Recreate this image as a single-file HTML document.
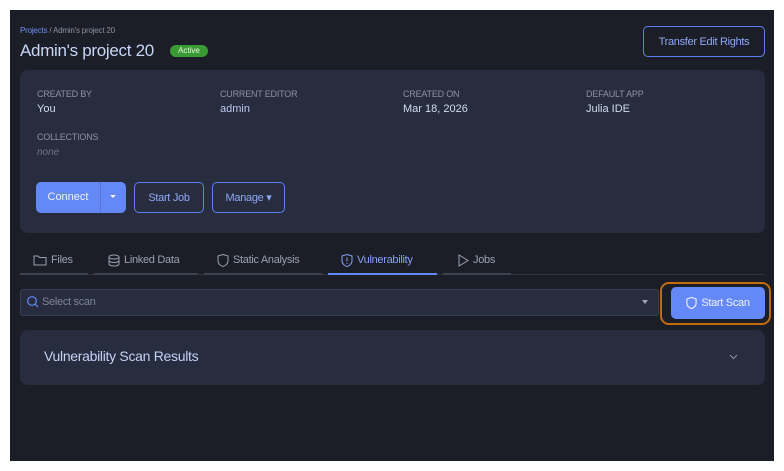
<!DOCTYPE html>
<html><head><style>
*{box-sizing:border-box;margin:0;padding:0}
body{width:784px;height:471px;background:#fff;font-family:"Liberation Sans",sans-serif;position:relative;overflow:hidden}
#app{position:absolute;left:10px;top:10px;width:764px;height:451px;background:#1b1e27}
.a{position:absolute}
.lbl{font-size:9px;color:#8b91a3;letter-spacing:-0.2px}
.val{font-size:11px;color:#b9c8ee}
.btn{position:absolute;border:1.5px solid #5b7ff0;border-radius:5px;color:#8fa8f5;font-size:11px;display:flex;align-items:center;justify-content:center;letter-spacing:-0.3px}
.tab{position:absolute;top:253px;height:14px;font-size:11px;color:#9aa0b0;display:flex;align-items:center;gap:4px;letter-spacing:-0.3px}
.ul{position:absolute;top:273px;height:2px;background:#3d4250}
</style></head><body>
<div id="app"></div>
<div class="a" style="left:20px;top:26px;font-size:8px;color:#8a90a0;letter-spacing:-0.2px"><span style="color:#6f8ff0">Projects</span> / Admin's project 20</div>
<div class="a" style="left:20px;top:41px;font-size:17px;color:#c7d5f6;letter-spacing:-0.3px">Admin's project 20</div>
<div class="a" style="left:170px;top:45px;width:38px;height:12px;border-radius:6px;background:#3a9a34;color:#e6f5e0;font-size:8px;text-align:center;line-height:12px">Active</div>
<div class="btn" style="left:643px;top:26px;width:122px;height:31px">Transfer Edit Rights</div>
<div class="a" style="left:20px;top:70px;width:745px;height:163px;background:#282c3f;border-radius:8px"></div>
<div class="a lbl" style="left:37px;top:89px">CREATED BY</div><div class="a val" style="left:37px;top:103px;color:#d3dbef">You</div>
<div class="a lbl" style="left:220px;top:89px">CURRENT EDITOR</div><div class="a val" style="left:220px;top:103px">admin</div>
<div class="a lbl" style="left:403px;top:89px">CREATED ON</div><div class="a val" style="left:403px;top:103px;color:#d3dbef">Mar 18, 2026</div>
<div class="a lbl" style="left:586px;top:89px">DEFAULT APP</div><div class="a val" style="left:586px;top:103px;color:#d3dbef">Julia IDE</div>
<div class="a lbl" style="left:37px;top:132px">COLLECTIONS</div><div class="a" style="left:37px;top:147px;font-size:10px;color:#6e7385;font-style:italic">none</div>
<div class="a" style="left:36px;top:182px;width:90px;height:31px;background:#6488f5;border-radius:5px"></div>
<div class="a" style="left:100px;top:182px;width:1px;height:31px;background:#5474dc"></div>
<div class="a" style="left:36px;top:190px;width:64px;text-align:center;font-size:11px;line-height:14px;color:#eef2ff">Connect</div>
<div class="a" style="left:110px;top:195px;border-left:3px solid transparent;border-right:3px solid transparent;border-top:3px solid #eef2ff"></div>
<div class="btn" style="left:134px;top:182px;width:70px;height:31px">Start Job</div>
<div class="btn" style="left:212px;top:182px;width:73px;height:31px">Manage ▾</div>
<div class="a" style="left:20px;top:274px;width:745px;height:1px;background:#2f3340"></div>
<div class="ul" style="left:20px;width:68px"></div>
<div class="ul" style="left:94px;width:104px"></div>
<div class="ul" style="left:204px;width:118px"></div>
<div class="ul" style="left:328px;width:109px;background:#6488f5"></div>
<div class="ul" style="left:443px;width:68px"></div>
<div class="tab" style="left:33px"><svg width="14" height="12" viewBox="0 0 14 12"><path d="M1 2h4l1.5 1.5H13V11H1z" fill="none" stroke="#9aa0b0"/></svg>Files</div>
<div class="tab" style="left:108px"><svg width="12" height="13" viewBox="0 0 12 13"><ellipse cx="6" cy="3" rx="5" ry="2" fill="none" stroke="#9aa0b0"/><path d="M1 3v7c0 1 2 2 5 2s5-1 5-2V3M1 6.5c0 1 2 2 5 2s5-1 5-2" fill="none" stroke="#9aa0b0"/></svg>Linked Data</div>
<div class="tab" style="left:217px"><svg width="12" height="13" viewBox="0 0 12 13"><path d="M1 2l5-1.5L11 2v5c0 3-3 5-5 5.5C4 12 1 10 1 7z" fill="none" stroke="#9aa0b0"/></svg>Static Analysis</div>
<div class="tab" style="left:341px;color:#86a2f5"><svg width="12" height="13" viewBox="0 0 12 13"><path d="M1 2l5-1.5L11 2v5c0 3-3 5-5 5.5C4 12 1 10 1 7z" fill="none" stroke="#86a2f5"/><path d="M6 3.5v4M6 9v1" stroke="#86a2f5"/></svg>Vulnerability</div>
<div class="tab" style="left:457px"><svg width="12" height="13" viewBox="0 0 12 13"><path d="M2 1l9 5.5L2 12z" fill="none" stroke="#9aa0b0"/></svg>Jobs</div>
<div class="a" style="left:20px;top:289px;width:639px;height:27px;background:#282c3f;border:1px solid #3a3f52;border-radius:3px"></div>
<svg class="a" style="left:26px;top:295px" width="13" height="13" viewBox="0 0 13 13"><circle cx="6" cy="6" r="4.3" fill="none" stroke="#6488f5" stroke-width="1.2"/><path d="M9 9l3 3" stroke="#6488f5" stroke-width="1.2"/></svg>
<div class="a" style="left:42px;top:296px;font-size:11px;line-height:13px;color:#7d8396;letter-spacing:-0.3px">Select scan</div>
<div class="a" style="left:642px;top:300px;border-left:3px solid transparent;border-right:3px solid transparent;border-top:4px solid #a0a6b5"></div>
<div class="a" style="left:660px;top:282px;width:111px;height:43px;border:2px solid #c26a0c;border-radius:9px"></div>
<div class="a" style="left:671px;top:287px;width:94px;height:32px;background:#6488f5;border-radius:5px;color:#eef2ff;font-size:11px;display:flex;align-items:center;justify-content:center;gap:4px;letter-spacing:-0.3px"><svg width="11" height="12" viewBox="0 0 12 13"><path d="M1 2l5-1.5L11 2v5c0 3-3 5-5 5.5C4 12 1 10 1 7z" fill="none" stroke="#eef2ff" stroke-width="1.2"/></svg>Start Scan</div>
<div class="a" style="left:20px;top:330px;width:745px;height:55px;background:#282c3f;border-radius:8px"></div>
<div class="a" style="left:44px;top:348px;font-size:14px;color:#c2d2f5;letter-spacing:-0.3px">Vulnerability Scan Results</div>
<svg class="a" style="left:729px;top:354px" width="9" height="6" viewBox="0 0 9 6"><path d="M1 1l3.5 3.5L8 1" fill="none" stroke="#8a90a0"/></svg>
</body></html>
